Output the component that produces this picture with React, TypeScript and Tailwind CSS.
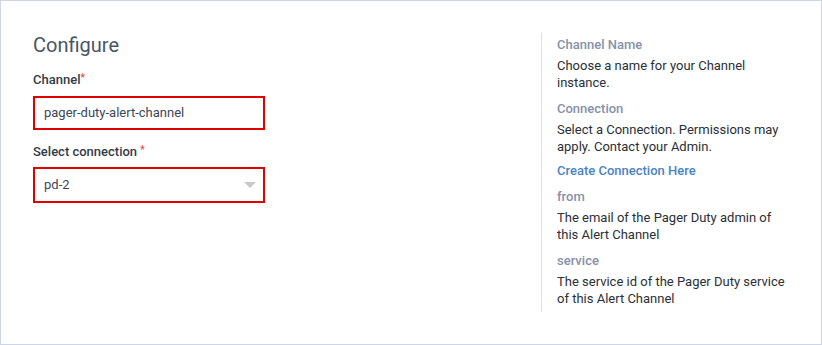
import React from "react";

const Field = ({ label, desc, link }: { label: string; desc: string; link?: string }) => (
  <div className="mb-[10px]">
    <div className="text-[13px] leading-[16px] font-medium text-[#8791a8]">{label}</div>
    <div className="mt-[4px] text-[13px] leading-[17px] text-[#2b2f36]">{desc}</div>
    {link && (
      <div className="mt-[7px] text-[13px] leading-[17px] font-medium text-[#4a84c4]">{link}</div>
    )}
  </div>
);

export default function App() {
  return (
    <div className="w-[822px] h-[345px] bg-white" style={{ fontFamily: "Roboto, 'Liberation Sans', sans-serif" }}>
      <div className="w-full h-full border border-[#cdd5e6] flex pt-[32px] pl-[32px]">
        <div className="w-[508px]">
          <h1 className="text-[20px] leading-[24px] text-[#4b5566] font-normal">Configure</h1>
          <label className="block mt-[15px] text-[13px] leading-[16px] font-medium text-[#333b4a]">
            Channel<span className="text-[#e0484b] text-[10px] align-top relative -top-[2px]">*</span>
          </label>
          <div className="mt-[8px] w-[232px] h-[34px] border-2 border-[#e00000] flex items-center pl-[9px] text-[13px] text-[#3d4657]">
            pager-duty-alert-channel
          </div>
          <label className="block mt-[14px] text-[13px] leading-[16px] font-medium text-[#333b4a]">
            Select connection <span className="text-[#e0484b] text-[10px] align-top relative -top-[2px]">*</span>
          </label>
          <div className="mt-[7px] w-[232px] h-[36px] border-2 border-[#e00000] flex items-center justify-between pl-[9px] pr-[7px] text-[13px] text-[#3d4657]">
            <span>pd-2</span>
            <svg width="12" height="7" viewBox="0 0 12 7">
              <path d="M0 0 L12 0 L6 6 Z" fill="#c7c9ce" />
            </svg>
          </div>
        </div>
        <div className="self-start w-[248px] border-l border-[#dedede] pl-[15px] pr-[0px] pt-[4px] pb-[5px]">
          <div className="w-[232px]">
            <Field label="Channel Name" desc="Choose a name for your Channel instance." />
            <Field
              label="Connection"
              desc="Select a Connection. Permissions may apply. Contact your Admin."
              link="Create Connection Here"
            />
            <Field label="from" desc="The email of the Pager Duty admin of this Alert Channel" />
            <div>
              <div className="text-[13px] leading-[16px] font-medium text-[#8791a8]">service</div>
              <div className="mt-[4px] text-[13px] leading-[17px] text-[#2b2f36]">
                The service id of the Pager Duty service of this Alert Channel
              </div>
            </div>
          </div>
        </div>
      </div>
    </div>
  );
}
